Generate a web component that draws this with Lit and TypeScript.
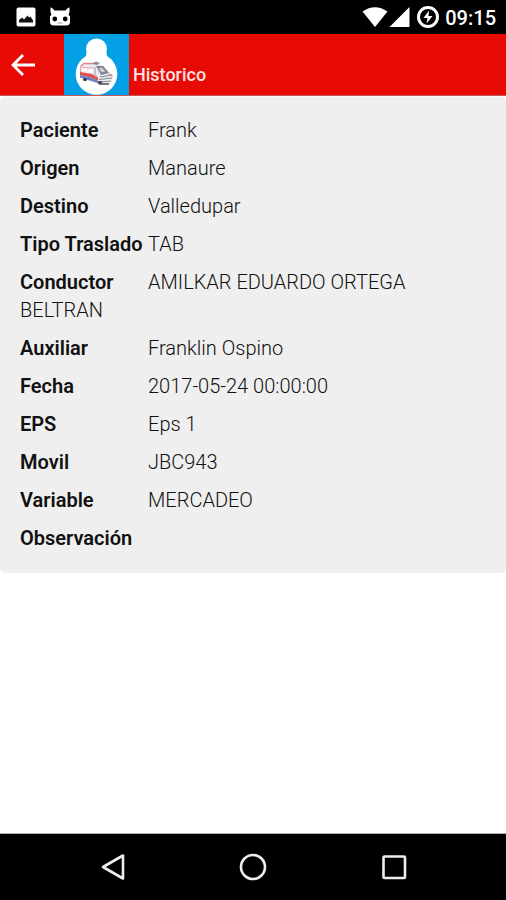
import { LitElement, html, css } from "lit";
import { customElement } from "lit/decorators.js";

const RECORD: Array<[string, string]> = [
  ["Paciente", "Frank"],
  ["Origen", "Manaure"],
  ["Destino", "Valledupar"],
  ["Tipo Traslado", "TAB"],
  ["Conductor", "AMILKAR EDUARDO ORTEGA BELTRAN"],
  ["Auxiliar", "Franklin Ospino"],
  ["Fecha", "2017-05-24 00:00:00"],
  ["EPS", "Eps 1"],
  ["Movil", "JBC943"],
  ["Variable", "MERCADEO"],
  ["Observación", ""],
];

@customElement("status-bar")
export class StatusBar extends LitElement {
  static styles = css`
    :host {
      display: flex;
      justify-content: space-between;
      align-items: center;
      height: 34px;
      padding: 0 10px 0 16px;
      background: #000;
      color: #fff;
      font-size: 20px;
      font-weight: 500;
    }
    .group {
      display: flex;
      align-items: center;
    }
    .left {
      gap: 13px;
    }
    .time {
      padding: 2px 0 0 5px;
      line-height: 24px;
    }
    .battery {
      margin-left: 6px;
    }
    svg {
      display: block;
    }
  `;

  render() {
    return html`
      <div class="group left">
        <svg width="20" height="20" viewBox="0 0 20 20" aria-label="Imagen">
          <rect x="0.5" y="0.5" width="19" height="19" rx="2" fill="#fff" />
          <path d="M3 15.500V13L6 10.500 8 12.500 11.500 8.500 13 10.500 14.500 9.500 17 13.500V15.500z" fill="#111" />
        </svg>
        <svg width="22" height="20" viewBox="0 0 22 20" aria-label="Sistema">
          <path
            d="M1.500 0.500C3 0.500 4.500 2 5.500 3.500H16.500C17.500 2 19 0.500 20.500 0.500L20.500 5 19.500 8 21 9V15Q21 18.500 17 18.500H5Q1 18.500 1 15V9L2.500 8 1.500 5z"
            fill="#fff"
          />
          <circle cx="5.800" cy="12" r="2.400" fill="#000" />
          <circle cx="16.200" cy="12" r="2.400" fill="#000" />
          <path d="M8.500 16h5" stroke="#999" />
        </svg>
      </div>
      <div class="group">
        <svg width="26" height="20" viewBox="0 0 26 20" aria-label="Wi-Fi">
          <path d="M13 20L0.500 4.500Q13 -4 25.500 4.500z" fill="#fff" />
        </svg>
        <svg width="22" height="20" viewBox="0 0 22 20" aria-label="Señal">
          <path d="M21.500 0V20H1.500z" fill="#fff" />
        </svg>
        <svg class="battery" width="24" height="24" viewBox="0 0 24 24" aria-label="Batería">
          <circle cx="12" cy="12" r="9.500" fill="none" stroke="#fff" stroke-width="3" />
          <path d="M13 5.500L7.500 13H11.500L10.500 18.500 16.500 11H12.500z" fill="#fff" />
        </svg>
        <span class="time">09:15</span>
      </div>
    `;
  }
}

@customElement("title-bar")
export class TitleBar extends LitElement {
  static styles = css`
    :host {
      display: flex;
      height: 62px;
      background: #e80b05;
      color: #fff;
      box-sizing: border-box;
      border-bottom: 1px solid #c0575c;
    }
    .back {
      width: 64px;
      padding: 0 0 0 9px;
      border: 0;
      background: none;
      color: inherit;
      cursor: pointer;
    }
    svg {
      display: block;
    }
    .title {
      margin: 0 0 0 4px;
      padding-top: 28px;
      font-size: 18px;
      line-height: 26px;
      font-weight: 500;
      color: #fbe3e1;
    }
  `;

  render() {
    return html`
      <button class="back" aria-label="Volver">
        <svg width="28" height="28" viewBox="0 0 28 28" fill="none" stroke="#fff" stroke-width="2.800">
          <path d="M26 14H4.500M14 4L4 14L14 24" />
        </svg>
      </button>
      <svg width="65" height="61" viewBox="0 0 65 61" role="img" aria-label="Ambulancia">
        <rect width="65" height="61" fill="#04a0e5" />
        <circle cx="32.500" cy="15" r="10.500" fill="#fff" />
        <circle cx="32.500" cy="40" r="20.800" fill="#fff" />
        <path d="M23 17h19l1.500 7H21.500z" fill="#fff" />
        <path d="M16 32L19 29H33L40 32 46 39 49 41 48 48 44 51 34 50 16 44z" fill="#ecebf0" />
        <path d="M16.500 32.500L20 29.500H31" fill="none" stroke="#e57f80" stroke-width="1.300" />
        <path d="M16.500 32V43M18 33.500L29 34" fill="none" stroke="#eaa0a2" />
        <path d="M18.500 34.500H23V37.500L18.500 37zM24.500 35H28.500V38.500L24.500 38z" fill="#fff" />
        <path d="M16 38L28 40 34 44V47L27 43.500 16 41z" fill="#e4504d" />
        <path d="M16 41L27 43.500 34 47V49L26 46.500 16 43.500z" fill="#6580c6" />
        <path d="M28 29.500L32 27.500 36 29 33 31z" fill="#8b8e96" />
        <path d="M32 32L39 32 45 39 37 41z" fill="#7d828c" />
        <path d="M34.500 34L38 33.500 41.500 37.500 37.500 38.500z" fill="#c9ccd4" />
        <path d="M31 33V40.500L34 44" fill="none" stroke="#9499a4" />
        <path d="M36 43L47.500 41M35 45.500L48 44M36 48L47 47" fill="none" stroke="#85878e" />
        <path d="M35 50H45" stroke="#505258" stroke-width="1.500" />
        <path d="M45 39.500L48.500 42" stroke="#c96b6d" />
        <ellipse cx="21" cy="45.500" rx="2" ry="1.500" fill="#33353a" />
        <ellipse cx="36" cy="48.500" rx="2.200" ry="1.800" fill="#4c4e54" />
      </svg>
      <h1 class="title">Historico</h1>
    `;
  }
}

@customElement("nav-bar")
export class NavBar extends LitElement {
  static styles = css`
    :host {
      display: grid;
      grid-template-columns: 1fr 1fr 1fr;
      padding: 0 42px;
      height: 66px;
      background: #000;
      border-top: 1px solid #aaa;
    }
    .key {
      display: flex;
      align-items: center;
      justify-content: center;
      padding: 0;
      border: 0;
      background: none;
      cursor: pointer;
    }
  `;

  render() {
    return html`
      <button class="key" aria-label="Atrás">
        <svg width="28" height="28" viewBox="0 0 28 28" fill="none" stroke="#eee" stroke-width="2.600" stroke-linejoin="round">
          <path d="M25 2.500V25.500L5 14z" />
        </svg>
      </button>
      <button class="key" aria-label="Inicio">
        <svg width="28" height="28" viewBox="0 0 28 28" fill="none" stroke="#eee" stroke-width="2.600">
          <circle cx="14" cy="14" r="12" />
        </svg>
      </button>
      <button class="key" aria-label="Recientes">
        <svg width="28" height="28" viewBox="0 0 28 28" fill="none" stroke="#eee" stroke-width="2.600">
          <rect x="3.500" y="3.500" width="21.500" height="21.500" rx="1" />
        </svg>
      </button>
    `;
  }
}

@customElement("app-root")
export class AppRoot extends LitElement {
  static styles = css`
    :host {
      display: flex;
      flex-direction: column;
      min-height: 100vh;
      background: #fff;
      font-family: Roboto, "Liberation Sans", sans-serif;
    }
    .content {
      flex: 1;
    }
    .card {
      margin: 0;
      padding: 14px 20px 16px;
      border-radius: 6px;
      border-top: 1px solid #f8f5f5;
      background: #efefef;
      color: #111;
      font-size: 20px;
      line-height: 28px;
    }
    .row {
      padding: 5px 0;
    }
    .label {
      display: inline-block;
      min-width: 128px;
      white-space: nowrap;
      font-weight: 600;
    }
    .value {
      display: inline;
      margin: 0;
      font-weight: 300;
    }
  `;

  render() {
    return html`
      <status-bar></status-bar>
      <title-bar></title-bar>
      <main class="content">
        <dl class="card">
          ${RECORD.map(
            ([label, value]) =>
              html`<div class="row"><dt class="label">${label}</dt><dd class="value">${value}</dd></div>`
          )}
        </dl>
      </main>
      <nav-bar></nav-bar>
    `;
  }
}
